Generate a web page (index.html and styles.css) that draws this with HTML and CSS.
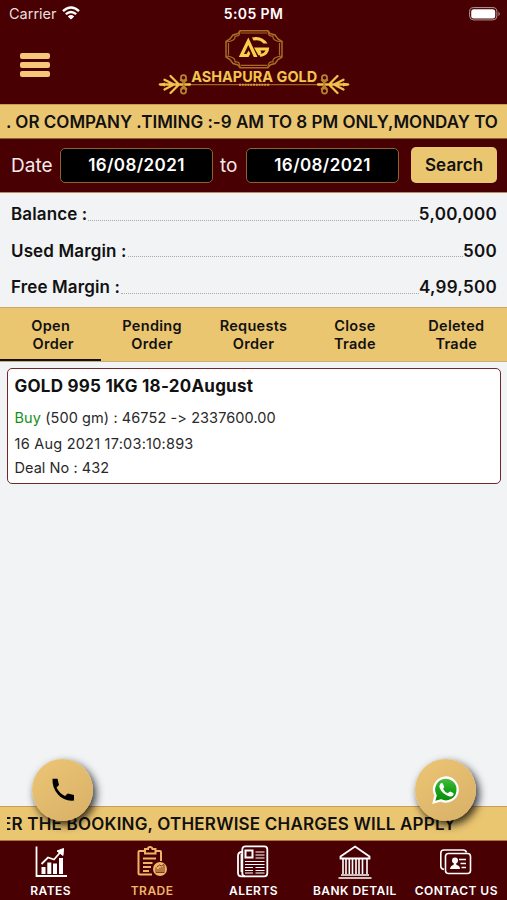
FILE: index.html
```html
<!DOCTYPE html>
<html lang="en">
<head>
<meta charset="utf-8">
<title>Ashapura Gold</title>
<link rel="stylesheet" href="styles.css">
</head>
<body>
<div class="app">
  <header class="header">
    <div class="status">
      <div class="carrier"><span>Carrier</span>
        <svg width="18" height="14" viewBox="0 0 18 14" fill="none" stroke="#fff" stroke-width="2.4"><path d="M1 5.2Q9-2.2 17 5.2M3.8 8.2Q9 3.6 14.2 8.2"/><path d="M9 13.6L5.8 10.4Q9 7.8 12.2 10.4Z" fill="#fff" stroke="none"/></svg>
      </div>
      <div class="clock">5:05 PM</div>
      <svg class="battery" width="32" height="14" viewBox="0 0 32 14"><rect x=".6" y=".6" width="27.3" height="12.3" rx="4" fill="none" stroke="#b89a9a"/><rect x="2.2" y="2.2" width="24" height="9.2" rx="2.5" fill="#fff"/><path d="M29.5 4.5q2.4 2.3 0 4.8z" fill="#b89a9a"/></svg>
    </div>
    <div class="brandbar">
      <button class="menu" aria-label="Menu"><i></i><i></i><i></i></button>
      <svg class="logo" width="194" height="68" viewBox="157 28 194 68">
        <g fill="none" stroke="#a96b25" stroke-width="1.5">
          <path d="M240 30.700H268L270 33.500L275 35L278 39L282 41.500V57L278 59.500L275 63.500L270 65L268 67.700H240L238 65L233 63.500L230 59.500L226 57V41.500L230 39L233 35L238 33.500Z"/>
          <path stroke-width="1.2" d="M241 33H267M241 65.400H267M228.500 43V55.500M279.500 43V55.500M240 31q0 6-5 5q1 5-9 6M268 31q0 6 5 5q-1 5 9 6M240 67q0-6-5-5q1-5-9-6M268 67q0-6 5-5q-1-5 9-6"/>
        </g>
        <g fill="#f8cf4b">
          <path d="M248.300 37.500L257.500 57H253.800L248.300 45L244 54H246.500L248.700 50.500L250.300 53.800L248.500 57H238.800Z"/>
          <path d="M252 37.500Q262 35 267.500 43.500H263.500Q260 39 253.500 40.500Z"/>
          <path d="M254 47.500H269.200Q269 55.500 260.500 57L259 54.300Q264.500 53.500 265.500 50.500H260.500L261.500 53L258.500 55.500Z"/>
        </g>
        <text x="191.200" y="82" class="logo-name" textLength="126" lengthAdjust="spacingAndGlyphs">ASHAPURA GOLD</text>
        <path d="M190 84.700H319" stroke="#b37b29" stroke-width="1"/>
        <path d="M239 84.700H270" stroke="#d79c36" stroke-width="2" stroke-dasharray="2 .8"/>
        <g id="flourish" fill="none" stroke="#f0c24a" stroke-width="2.300" stroke-linecap="round">
          <path d="M160 84.500H190M179 84.500L170.500 76M179 84.500L170.500 93M174 84.500L164.500 79.800M174 84.500L164.500 89.500"/>
          <path d="M158 84.500L165 82.500V86.500Z" fill="#f0c24a" stroke="none"/>
          <g stroke="#b98230" stroke-width="1.700"><circle cx="183.500" cy="77.800" r="2.600"/><circle cx="183.500" cy="91" r="2.600"/><path d="M180.500 80Q187 83 181 89M186.500 80Q181 84 186.500 89"/></g>
          <circle cx="189" cy="84.500" r="1.100" fill="#f0c24a" stroke="none"/>
        </g>
        <use href="#flourish" transform="translate(508 0) scale(-1 1)"/>
      </svg>
    </div>
  </header>
  <div class="ticker ticker-top"><span>. OR COMPANY .TIMING :-9 AM TO 8 PM ONLY,MONDAY TO</span></div>
  <form class="filter">
    <span class="lbl">Date</span><div class="date">16/08/2021</div><span class="lbl to">to</span><div class="date">16/08/2021</div><button type="button" class="search">Search</button>
  </form>
  <section class="balances">
    <div class="row"><span>Balance :</span><i></i><b>5,00,000</b></div>
    <div class="row"><span>Used Margin :</span><i></i><b>500</b></div>
    <div class="row"><span>Free Margin :</span><i></i><b>4,99,500</b></div>
  </section>
  <nav class="tabs">
    <a class="active">Open<br><span>Order</span></a><a>Pending<br>Order</a><a>Requests<br>Order</a><a>Close<br>Trade</a><a>Deleted<br>Trade</a>
  </nav>
  <main class="content">
    <article class="card">
      <h2>GOLD 995 1KG 18-20August</h2>
      <p class="deal"><em>Buy</em> (500 gm) : 46752 -&gt; 2337600.00</p>
      <p class="time">16 Aug 2021 17:03:10:893</p>
      <p class="number">Deal No : 432</p>
    </article>
  </main>
  <div class="ticker ticker-bottom"><div class="clip"><span>ER THE BOOKING, OTHERWISE CHARGES WILL APPLY</span></div></div>
  <nav class="bottom">
    <a><svg width="34" height="34" viewBox="0 0 34 34" fill="none" stroke="#fff" stroke-width="1.800"><path d="M2.500 1.500V31H33"/><path d="M7.500 19L14 12.500L20 14.500L27 6.500"/><path d="M23 6L29.500 3.500L29 10.500Z" fill="#fff" stroke-width="1"/><path d="M9.500 29V22M15.300 29V17.500M21 29V18.500M27 29V13" stroke-width="4"/></svg><span>RATES</span></a>
    <a class="on"><svg width="34" height="34" viewBox="0 0 34 34" fill="none" stroke="#efb467" stroke-width="2"><path d="M11 6H4.500Q3.500 6 3.500 7V28Q3.500 29.500 5 29.500H17M20 6H25Q26 6 26 7V16"/><path d="M10 4H13Q13 2 15 2T17.500 4H20.500V8.500H10Z"/><path d="M8 13.500H21M8 18H17.500M8 22H16M8 26H14" stroke-width="1.800"/><circle cx="25" cy="24" r="7" fill="#efb467" stroke="none"/><path d="M21 22.500V27.500H29.500M23 27V24M25 27V22.500M27 27V22M29 27V20M22 22L24.500 20L26.500 21L29.500 19" stroke="#6d2d17" stroke-width=".9"/></svg><span>TRADE</span></a>
    <a><svg width="34" height="34" viewBox="0 0 34 34" fill="none" stroke="#fff" stroke-width="1.800"><rect x="6.300" y="1.300" width="25" height="30" rx="3"/><path d="M6 7Q2 7 2 11V28Q2 31.300 5.500 31.300H9M5.500 9V27"/><rect x="9.500" y="5.500" width="7" height="7" stroke-width="2"/><path d="M19.500 7H28.500M19.500 10H28.500M19.500 13H28.500M9 16.500H28.500M9 19.500H28.500M9 22.500H17M19.500 22.500H28.500M9 25.500H17M19.500 25.500H28.500M9 28H17M19.500 28H28.500" stroke-width="1.100"/></svg><span>ALERTS</span></a>
    <a><svg width="34" height="34" viewBox="0 0 34 34" fill="none" stroke="#fff" stroke-width="1.800"><path d="M17 1.500L31.500 11.500V13.500H2.500V11.500Z"/><path d="M3 30H31M.5 33H33.500" stroke-width="1.700"/><path d="M5 14V29M8 14V29M11.300 14V29M14.500 14V29M18 14V29M21 14V29M24.500 14V29M29 14V29" stroke-width="1.600"/></svg><span>BANK DETAIL</span></a>
    <a><svg width="34" height="34" viewBox="0 0 34 34" fill="none" stroke="#fff" stroke-width="1.600"><rect x="6.500" y="8.500" width="25" height="20" rx="3"/><path d="M5 24.500Q1.800 24 1.800 21V8Q1.800 5 5 5H24Q27 5 27.500 7.500"/><circle cx="16" cy="15.500" r="3" fill="#fff" stroke="none"/><path d="M11 24Q11.500 20.500 14.500 20L15 17.500H17L17.500 20Q21 20.500 21 24Z" fill="#fff" stroke="none"/><path d="M20 14.500H27M21.500 18.500H27M22.500 22.500H27"/></svg><span>CONTACT US</span></a>
  </nav>
  <button class="fab call" aria-label="Call"><svg width="24" height="24" viewBox="0 0 24 24"><path d="M1.500.8H6.500L8 7L5.500 9.500Q8.500 15.500 14 18L16.800 15.500L23 17V22.500Q13 23.500 7 16.500Q1 10 1.500.8Z"/></svg></button>
  <button class="fab chat" aria-label="WhatsApp"><svg width="30" height="30" viewBox="0 0 30 30"><defs><linearGradient id="green" x1="0" y1="0" x2="0" y2="1"><stop stop-color="#4bbf43"/><stop offset=".5" stop-color="#19a319"/><stop offset="1" stop-color="#078908"/></linearGradient></defs><path d="M2.800 27.300L4.600 20.500A11.800 12 0 1 1 9.800 25.400Z" fill="url(#green)" stroke="#fff" stroke-width="2.300"/><path d="M9.500 8.500Q11 7.300 12 8.800L13.200 11.700Q13.200 12.800 12 13.700Q13.500 17 16.800 18.300L18.200 16.900Q18.900 16.300 19.700 16.700L22.200 18Q23.100 18.600 22.200 20.200Q20.800 22 18.500 21.500Q11 19 8.700 13Q8 10.400 9.500 8.500Z" fill="#fff"/></svg></button>
</div>
</body>
</html>
```

FILE: styles.css
```css
* { box-sizing: border-box; }
body { margin: 0; font-family: Inter, "Liberation Sans", sans-serif; font-feature-settings: "calt" 0; color: #111; }
button { border: 0; padding: 0; font-family: inherit; }
.app { position: relative; width: 507px; height: 900px; overflow: hidden; display: flex; flex-direction: column; background: #f2f3f5; }
.header { height: 104px; background: #480003; color: #fff; flex: none; }
.status { height: 28px; display: grid; grid-template-columns: 1fr 80px 1fr; align-items: center; padding: 0 6px 0 9px; }
.carrier { display: flex; align-items: center; gap: 5px; font-size: 14.500px; color: #eadede; }
.carrier span { width: 48px; margin-top: -1px; }
.carrier svg { margin-top: -3px; }
.clock { font-size: 14px; font-weight: 600; text-align: center; letter-spacing: .4px; white-space: nowrap; margin: -1px 0 0 -3px; }
.battery { justify-self: end; margin-top: -1px; }
.brandbar { height: 76px; display: grid; grid-template-columns: 157px 194px 1fr; align-items: start; }
.menu { width: 30px; margin: 25px 0 0 20px; background: none; display: flex; flex-direction: column; gap: 3px; }
.menu i { width: 30px; height: 6px; border-radius: 2px; background: #f4c779; }
.logo-name { font: 700 15px Inter, sans-serif; fill: #efc64f; }
.ticker { flex: none; height: 34px; background: #ebc671; font-size: 17px; font-weight: 600; line-height: 34px; white-space: nowrap; overflow: hidden; border-top: 1px solid #c99d54; }
.ticker-top { padding-left: 6px; }
.filter { flex: none; height: 55px; background: #480003; border-top: 1px solid #8d622c; border-bottom: 1px solid #b98b62; display: flex; align-items: center; padding: 0 10px 1px 11px; }
.lbl { width: 49px; color: #f4eaea; font-size: 19px; }
.to { width: 33px; padding-left: 7px; }
.date { width: 153.500px; height: 35px; border: 1px solid #8b6430; border-radius: 5px; background: #000; color: #fff; font-size: 17px; font-weight: 600; letter-spacing: .4px; line-height: 33px; text-align: center; }
.search { width: 86px; height: 36px; margin-left: 12px; border-radius: 5px; background: #ebc671; font-size: 17px; font-weight: 600; letter-spacing: .1px; color: #111; }
.balances { flex: none; height: 114px; padding: 3px 10px 0 11px; font-size: 17px; font-weight: 600; letter-spacing: .13px; }
.row { height: 36.500px; display: flex; align-items: center; }
.row i { flex: 1; margin: 12px 0 0 1px; border-top: 1px dotted #aaa; }
.row b { font-weight: 600; letter-spacing: .3px; }
.tabs { flex: none; height: 55px; display: grid; grid-template-columns: repeat(5, 1fr); background: #ebc671; border-top: 1px solid #c8a867; border-bottom: 1px solid #c8ad78; }
.tabs a { padding-top: 9px; text-align: center; font-size: 14.500px; line-height: 17.500px; font-weight: 600; letter-spacing: .3px; }
.tabs span { padding-left: 5px; }
.tabs .active { border-bottom: 2px solid #111; }
.content { flex: 1; padding: 6px 6px 0 7px; }
.card { height: 116px; border: 1.500px solid #70292b; border-radius: 5px; background: #fff; padding: 7px 7px 0 6.500px; }
.card h2, .card p { margin: 0; }
.card h2 { font-size: 17px; line-height: 21px; font-weight: 700; letter-spacing: .24px; }
.card p { font-size: 14.500px; line-height: 18px; color: #292929; letter-spacing: .23px; }
.card .deal { margin-top: 12px; letter-spacing: .09px; }
.card em { color: #169016; font-style: normal; }
.card .time { margin-top: 8px; }
.card .number { margin-top: 6px; letter-spacing: .05px; }
.ticker-bottom { letter-spacing: .2px; }
.clip { margin-left: 7px; overflow: hidden; }
.clip span { display: block; margin-left: -6px; }
.bottom { flex: none; height: 60px; background: #480003; border-top: 1px solid #a97343; display: grid; grid-template-columns: repeat(5, 1fr); color: #fff; }
.bottom a { display: flex; flex-direction: column; align-items: center; padding-top: 4px; font-size: 12px; line-height: 15px; font-weight: 600; letter-spacing: .45px; white-space: nowrap; }
.bottom svg { margin-bottom: 4px; }
.bottom .on { color: #efb467; }
.fab { position: absolute; top: 759px; width: 61px; height: 62px; border-radius: 50%; background: linear-gradient(145deg, #edc574, #d7b068); box-shadow: 3px 4px 9px rgba(0,0,0,.8); display: flex; align-items: center; justify-content: center; }
.call { left: 32px; }
.chat { left: 415px; }
```
